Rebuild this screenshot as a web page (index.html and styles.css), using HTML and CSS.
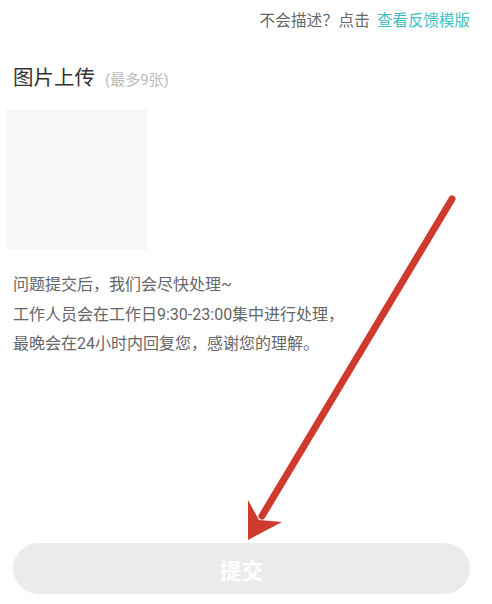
FILE: index.html
```html
<!DOCTYPE html>
<html lang="zh-CN">
<head>
<meta charset="utf-8">
<title>反馈</title>
<link rel="stylesheet" href="styles.css">
</head>
<body>
<div class="page">
  <div class="top">
    <span class="hint">不会描述？点击</span>
    <a class="link">查看反馈模版</a>
  </div>
  <div class="title">图片上传<span class="sub">(最多9张)</span></div>
  <div class="upload"></div>
  <div class="notes">
    <p>问题提交后，我们会尽快处理~</p>
    <p>工作人员会在工作日9:30-23:00集中进行处理，</p>
    <p>最晚会在24小时内回复您，感谢您的理解。</p>
  </div>
  <button class="submit">提交</button>
  <svg class="arrow" width="492" height="604" viewBox="0 0 492 604">
    <line x1="452" y1="199" x2="262" y2="516" stroke="#cf3a2d" stroke-width="7" stroke-linecap="round"/>
    <polygon points="248,540 248,500 259,520 282,522" fill="#cf3a2d"/>
  </svg>
</div>
</body>
</html>
```
FILE: styles.css
```css
html, body {
  margin: 0;
  padding: 0;
  background: #ffffff;
}
body {
  font-family: "Roboto", "Noto Sans CJK SC", sans-serif;
}
.page {
  position: relative;
  height: 604px;
  display: flex;
  flex-direction: column;
  overflow: hidden;
}
.top {
  height: 38px;
  display: flex;
  justify-content: flex-end;
  align-items: center;
  gap: 7px;
  padding-right: 22px;
  font-size: 15.5px;
}
.hint {
  color: #666666;
  letter-spacing: 0.3px;
}
.link {
  color: #3fbfc2;
}
.title {
  margin-top: 26px;
  padding-left: 13px;
  font-size: 20.5px;
  line-height: 28px;
  color: #333333;
}
.sub {
  margin-left: 10px;
  font-size: 15px;
  color: #bbbbbb;
}
.upload {
  margin-top: 15px;
  margin-left: 6px;
  width: 141px;
  height: 141px;
  background: #f7f7f7;
}
.notes {
  margin-top: 20px;
  padding-left: 13px;
  font-size: 16px;
  line-height: 29.5px;
  color: #666666;
}
.notes p {
  margin: 0;
}
.submit {
  margin: auto 22px 10px 13px;
  height: 51px;
  border: none;
  border-radius: 26px;
  background: #ebebeb;
  color: #ffffff;
  font-family: "Noto Sans CJK SC", sans-serif;
  font-size: 22px;
  font-weight: 700;
}
.arrow {
  position: absolute;
  left: 0;
  top: 0;
  pointer-events: none;
}
```
